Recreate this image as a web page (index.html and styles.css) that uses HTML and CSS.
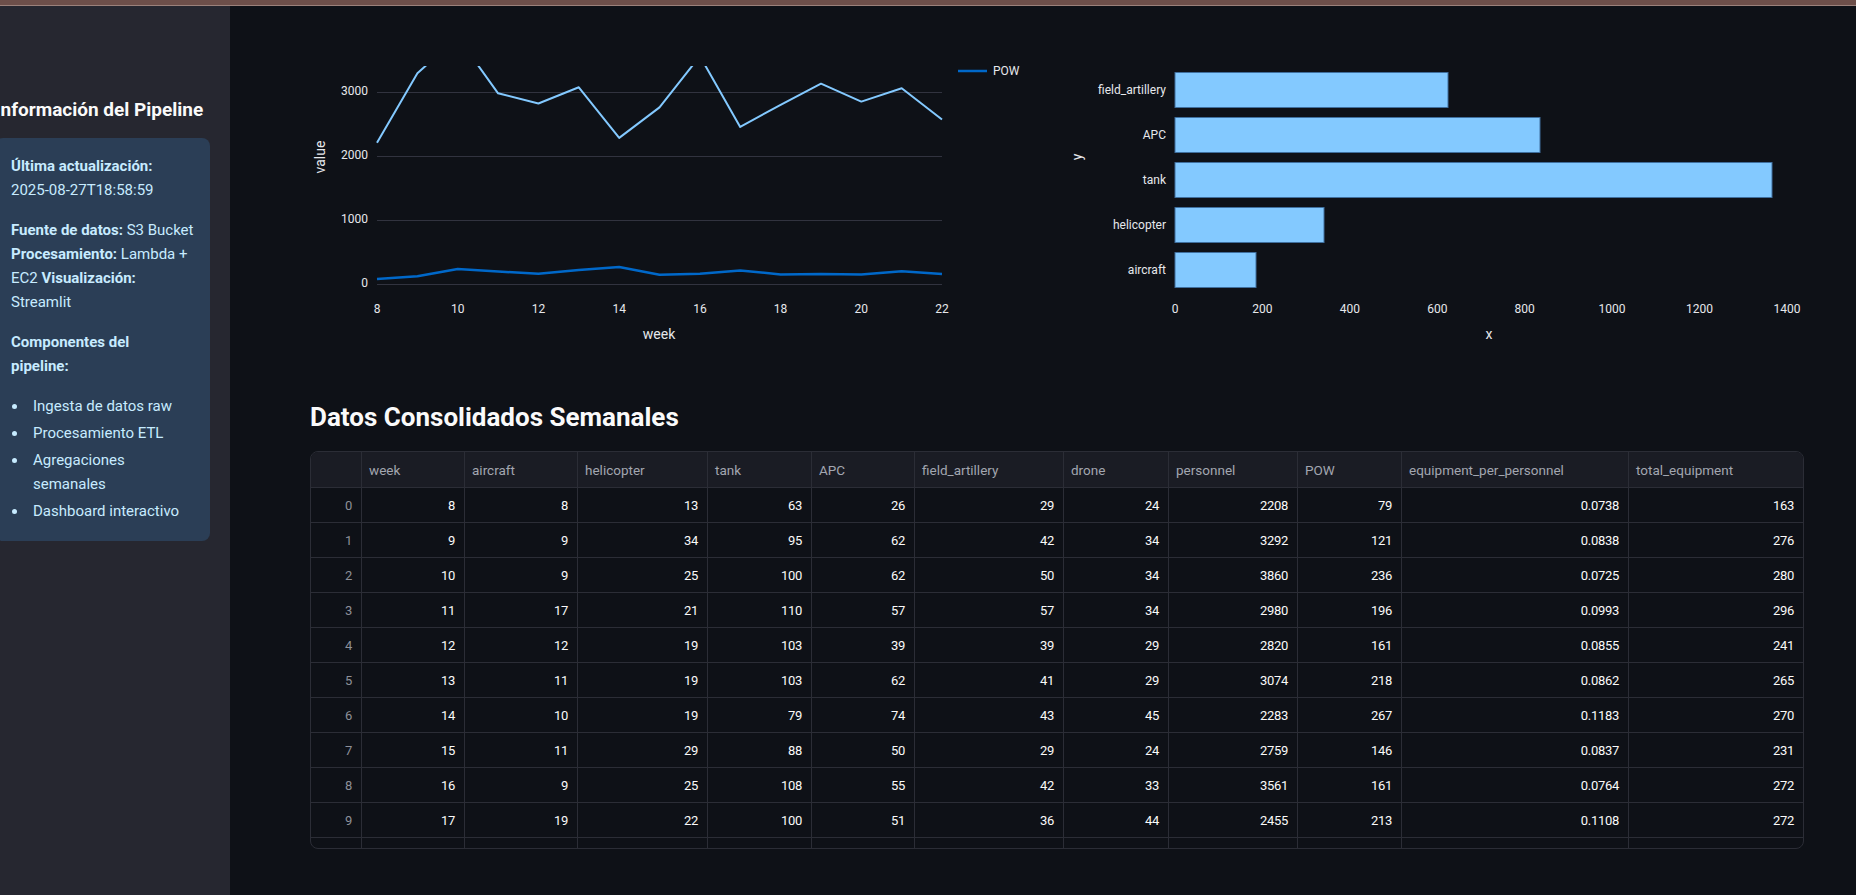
FILE: index.html
```html
<!DOCTYPE html>
<html lang="es">
<head>
<meta charset="utf-8">
<title>Pipeline Dashboard</title>
<link rel="stylesheet" href="styles.css">
</head>
<body>
<div class="topbar"></div>
<div class="app">
  <aside class="sidebar">
    <div class="sidebar-inner">
      <h3 class="side-title">Información del Pipeline</h3>
      <div class="info-card">
        <p><strong>Última actualización:</strong> 2025-08-27T18:58:59</p>
        <p><strong>Fuente de datos:</strong> S3 Bucket <strong>Procesamiento:</strong> Lambda + EC2 <strong>Visualización:</strong> Streamlit</p>
        <p><strong>Componentes del<br>pipeline:</strong></p>
        <ul class="bullets">
          <li>Ingesta de datos raw</li>
          <li>Procesamiento ETL</li>
          <li>Agregaciones semanales</li>
          <li>Dashboard interactivo</li>
        </ul>
      </div>
    </div>
  </aside>
  <main class="main">
    <div class="charts">
      <svg class="chart" width="739" height="320" viewBox="0 0 739 320">
        <defs>
          <clipPath id="plotclip"><rect x="60" y="36" width="580" height="230"/></clipPath>
        </defs>
        <g class="grid">
          <line x1="67" y1="62.5" x2="632" y2="62.5"/>
          <line x1="67" y1="126.5" x2="632" y2="126.5"/>
          <line x1="67" y1="190.5" x2="632" y2="190.5"/>
          <line x1="67" y1="254.5" x2="632" y2="254.5"/>
        </g>
        <g class="tick" text-anchor="end">
          <text x="58" y="61" dy=".35em">3000</text>
          <text x="58" y="125" dy=".35em">2000</text>
          <text x="58" y="189" dy=".35em">1000</text>
          <text x="58" y="253" dy=".35em">0</text>
        </g>
        <g class="tick" text-anchor="middle">
          <text x="67" y="279" dy=".35em">8</text>
          <text x="147.7" y="279" dy=".35em">10</text>
          <text x="228.4" y="279" dy=".35em">12</text>
          <text x="309.2" y="279" dy=".35em">14</text>
          <text x="389.9" y="279" dy=".35em">16</text>
          <text x="470.6" y="279" dy=".35em">18</text>
          <text x="551.3" y="279" dy=".35em">20</text>
          <text x="632" y="279" dy=".35em">22</text>
        </g>
        <text class="axis-title" x="349" y="304" dy=".35em" text-anchor="middle">week</text>
        <text class="axis-title" x="10" y="127" dy=".35em" text-anchor="middle" transform="rotate(-90 10 127)">value</text>
        <g clip-path="url(#plotclip)">
          <polyline class="line-light" points="67,112.7 107.4,43.3 147.7,7 188.1,63.3 228.4,73.5 268.8,57.3 309.2,107.9 349.5,77.4 389.9,26.1 430.2,96.9 470.6,74.8 511,53.7 551.3,71.6 591.7,58.2 632,89.5"/>
          <polyline class="line-dark" points="67,248.9 107.4,246.3 147.7,238.9 188.1,241.5 228.4,243.7 268.8,240 309.2,236.9 349.5,244.7 389.9,243.7 430.2,240.4 470.6,244.4 511,244 551.3,244.5 591.7,241.2 632,243.9"/>
        </g>
        <line class="line-dark" x1="648" y1="41" x2="677" y2="41"/>
        <text class="legend" x="683" y="41" dy=".35em">POW</text>
      </svg>
      <svg class="chart" width="739" height="320" viewBox="0 0 739 320">
        <g class="bars">
          <rect x="110" y="42.5" width="273" height="35"/>
          <rect x="110" y="87.5" width="365" height="35"/>
          <rect x="110" y="132.5" width="597" height="35"/>
          <rect x="110" y="177.5" width="149" height="35"/>
          <rect x="110" y="222.5" width="81" height="35"/>
        </g>
        <g class="tick" text-anchor="end">
          <text x="101" y="60" dy=".35em">field_artillery</text>
          <text x="101" y="105" dy=".35em">APC</text>
          <text x="101" y="150" dy=".35em">tank</text>
          <text x="101" y="195" dy=".35em">helicopter</text>
          <text x="101" y="240" dy=".35em">aircraft</text>
        </g>
        <g class="tick" text-anchor="middle">
          <text x="110" y="279" dy=".35em">0</text>
          <text x="197.4" y="279" dy=".35em">200</text>
          <text x="284.8" y="279" dy=".35em">400</text>
          <text x="372.3" y="279" dy=".35em">600</text>
          <text x="459.7" y="279" dy=".35em">800</text>
          <text x="547.1" y="279" dy=".35em">1000</text>
          <text x="634.5" y="279" dy=".35em">1200</text>
          <text x="721.9" y="279" dy=".35em">1400</text>
        </g>
        <text class="axis-title" x="424" y="304" dy=".35em" text-anchor="middle">x</text>
        <text class="axis-title" x="12" y="127" dy=".35em" text-anchor="middle" transform="rotate(-90 12 127)">y</text>
      </svg>
    </div>

    <h2 class="section-title">Datos Consolidados Semanales</h2>

    <div class="table">
      <div class="row head">
        <div class="cell"></div><div class="cell">week</div><div class="cell">aircraft</div><div class="cell">helicopter</div><div class="cell">tank</div><div class="cell">APC</div><div class="cell">field_artillery</div><div class="cell">drone</div><div class="cell">personnel</div><div class="cell">POW</div><div class="cell">equipment_per_personnel</div><div class="cell">total_equipment</div>
      </div>
      <div class="row"><div class="cell idx">0</div><div class="cell">8</div><div class="cell">8</div><div class="cell">13</div><div class="cell">63</div><div class="cell">26</div><div class="cell">29</div><div class="cell">24</div><div class="cell">2208</div><div class="cell">79</div><div class="cell">0.0738</div><div class="cell">163</div></div>
      <div class="row"><div class="cell idx">1</div><div class="cell">9</div><div class="cell">9</div><div class="cell">34</div><div class="cell">95</div><div class="cell">62</div><div class="cell">42</div><div class="cell">34</div><div class="cell">3292</div><div class="cell">121</div><div class="cell">0.0838</div><div class="cell">276</div></div>
      <div class="row"><div class="cell idx">2</div><div class="cell">10</div><div class="cell">9</div><div class="cell">25</div><div class="cell">100</div><div class="cell">62</div><div class="cell">50</div><div class="cell">34</div><div class="cell">3860</div><div class="cell">236</div><div class="cell">0.0725</div><div class="cell">280</div></div>
      <div class="row"><div class="cell idx">3</div><div class="cell">11</div><div class="cell">17</div><div class="cell">21</div><div class="cell">110</div><div class="cell">57</div><div class="cell">57</div><div class="cell">34</div><div class="cell">2980</div><div class="cell">196</div><div class="cell">0.0993</div><div class="cell">296</div></div>
      <div class="row"><div class="cell idx">4</div><div class="cell">12</div><div class="cell">12</div><div class="cell">19</div><div class="cell">103</div><div class="cell">39</div><div class="cell">39</div><div class="cell">29</div><div class="cell">2820</div><div class="cell">161</div><div class="cell">0.0855</div><div class="cell">241</div></div>
      <div class="row"><div class="cell idx">5</div><div class="cell">13</div><div class="cell">11</div><div class="cell">19</div><div class="cell">103</div><div class="cell">62</div><div class="cell">41</div><div class="cell">29</div><div class="cell">3074</div><div class="cell">218</div><div class="cell">0.0862</div><div class="cell">265</div></div>
      <div class="row"><div class="cell idx">6</div><div class="cell">14</div><div class="cell">10</div><div class="cell">19</div><div class="cell">79</div><div class="cell">74</div><div class="cell">43</div><div class="cell">45</div><div class="cell">2283</div><div class="cell">267</div><div class="cell">0.1183</div><div class="cell">270</div></div>
      <div class="row"><div class="cell idx">7</div><div class="cell">15</div><div class="cell">11</div><div class="cell">29</div><div class="cell">88</div><div class="cell">50</div><div class="cell">29</div><div class="cell">24</div><div class="cell">2759</div><div class="cell">146</div><div class="cell">0.0837</div><div class="cell">231</div></div>
      <div class="row"><div class="cell idx">8</div><div class="cell">16</div><div class="cell">9</div><div class="cell">25</div><div class="cell">108</div><div class="cell">55</div><div class="cell">42</div><div class="cell">33</div><div class="cell">3561</div><div class="cell">161</div><div class="cell">0.0764</div><div class="cell">272</div></div>
      <div class="row"><div class="cell idx">9</div><div class="cell">17</div><div class="cell">19</div><div class="cell">22</div><div class="cell">100</div><div class="cell">51</div><div class="cell">36</div><div class="cell">44</div><div class="cell">2455</div><div class="cell">213</div><div class="cell">0.1108</div><div class="cell">272</div></div>
      <div class="row"><div class="cell idx"></div><div class="cell"></div><div class="cell"></div><div class="cell"></div><div class="cell"></div><div class="cell"></div><div class="cell"></div><div class="cell"></div><div class="cell"></div><div class="cell"></div><div class="cell"></div><div class="cell"></div></div>
    </div>
  </main>
</div>
</body>
</html>
```

FILE: styles.css
```css
* { box-sizing: border-box; }

html, body {
  margin: 0;
  padding: 0;
  height: 100%;
  background: #0e1117;
  font-family: Roboto, "Liberation Sans", sans-serif;
  color: #fafafa;
  overflow: hidden;
}

.topbar {
  height: 6px;
  background: #6d4f4a;
  border-bottom: 1px solid #9b817b;
}

.app {
  display: flex;
  height: 889px;
}

.sidebar {
  width: 230px;
  flex: 0 0 230px;
  background: #262730;
  overflow: hidden;
  padding-top: 90px;
}

.sidebar-inner {
  margin-left: -5px;
  width: 215px;
}

.side-title {
  margin: 0 0 14px 0;
  font-size: 19px;
  line-height: 28px;
  font-weight: 700;
  color: #fafafa;
  white-space: nowrap;
}

.info-card {
  background: #2b3e56;
  border-radius: 8px;
  padding: 16px 16px 18px 16px;
  color: #c7ebff;
  font-size: 15px;
  line-height: 24px;
}

.info-card p {
  margin: 0 0 16px 0;
}

.info-card strong {
  font-weight: 700;
}

.bullets {
  list-style: none;
  margin: 0;
  padding: 0;
}

.bullets li {
  position: relative;
  padding-left: 22px;
  margin-top: 3px;
}

.bullets li:first-child {
  margin-top: 0;
}

.bullets li::before {
  content: "";
  position: absolute;
  left: 1px;
  top: 10px;
  width: 5px;
  height: 5px;
  border-radius: 50%;
  background: #c7ebff;
}

.main {
  flex: 1;
  min-width: 0;
  padding: 24px 52px 0 80px;
  background: #0e1117;
}

.charts {
  display: grid;
  grid-template-columns: 739px 739px;
  gap: 16px;
  height: 320px;
}

.chart {
  display: block;
  font-family: Roboto, "Liberation Sans", sans-serif;
}

.grid line {
  stroke: #31333f;
  stroke-width: 1;
}

.tick {
  font-size: 12px;
  fill: #e6e8ec;
}

.axis-title {
  font-size: 14px;
  fill: #e6e8ec;
}

.legend {
  font-size: 12px;
  fill: #e6e8ec;
}

.line-light {
  fill: none;
  stroke: #83c9ff;
  stroke-width: 2;
  stroke-linejoin: round;
}

.line-dark {
  fill: none;
  stroke: #0068c9;
  stroke-width: 2.5;
  stroke-linejoin: round;
}

.bars rect {
  fill: #83c9ff;
  stroke: #3f6f9e;
  stroke-width: 1;
}

.section-title {
  margin: 49px 0 16px 0;
  font-size: 26px;
  line-height: 36px;
  font-weight: 700;
  color: #fafafa;
}

.table {
  width: 1494px;
  height: 398px;
  border: 1px solid #2b2d36;
  border-radius: 8px;
  overflow: hidden;
  font-size: 13px;
  letter-spacing: -0.3px;
}

.row {
  display: grid;
  grid-template-columns: 51px 103px 113px 130px 104px 103px 149px 105px 129px 104px 227px 174px;
  height: 35px;
}

.row.head {
  height: 36px;
  background: #1a1c24;
}

.cell {
  border-right: 1px solid #2b2d36;
  border-bottom: 1px solid #2b2d36;
  padding: 0 9px;
  display: flex;
  align-items: center;
  justify-content: flex-end;
  color: #fafafa;
  white-space: nowrap;
  overflow: hidden;
}

.cell:last-child {
  border-right: none;
}

.head .cell {
  justify-content: flex-start;
  padding: 0 7px;
  font-size: 13.5px;
  letter-spacing: 0;
  color: #a2a6b0;
}

.cell.idx {
  color: #8d9099;
}
```
